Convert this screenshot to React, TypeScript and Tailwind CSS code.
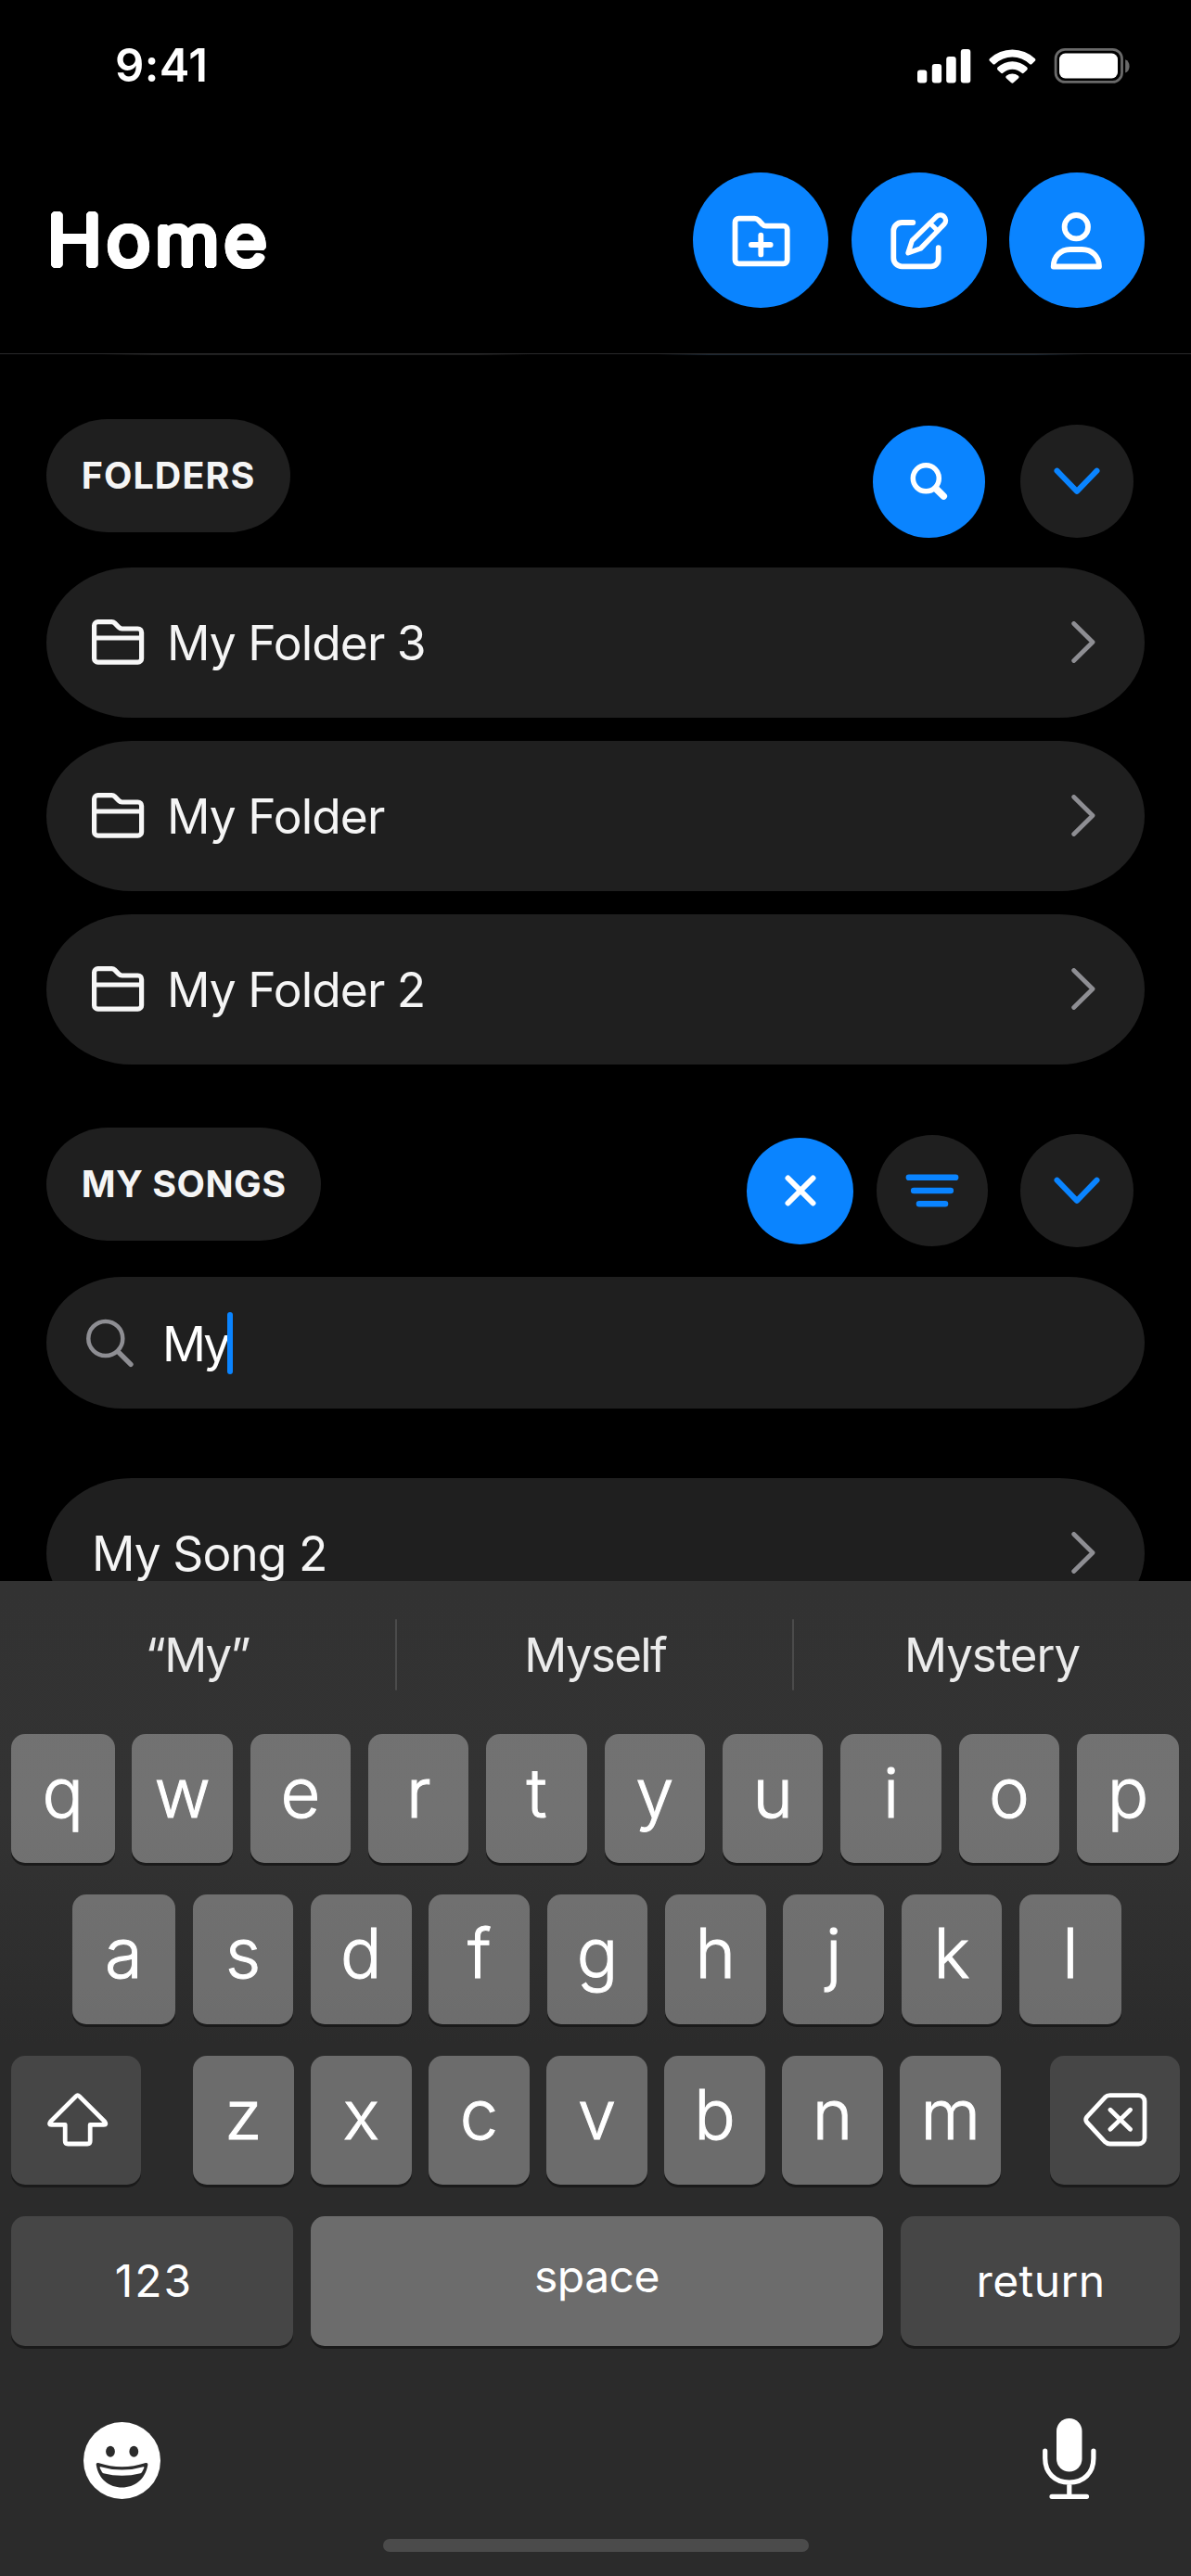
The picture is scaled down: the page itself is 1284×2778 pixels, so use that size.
import React from 'react';

const BLUE = '#0a84ff';

function StatusBar() {
  return (
    <div className="flex h-[141px] items-center justify-between pr-[66px] pl-[124px]">
      <span className="text-[49px] leading-none font-semibold tracking-[0.4px]">9:41</span>
      <svg width="229" height="38" viewBox="0 0 229 38" fill="#fff" aria-hidden>
        <rect x="0" y="23.5" width="10.3" height="14" rx="3" />
        <rect x="15.8" y="17" width="10.3" height="20.5" rx="3" />
        <rect x="31.2" y="9" width="10.5" height="28.5" rx="3" />
        <rect x="46.8" y="1" width="10.5" height="36.5" rx="3" />
        <path d="M77.9 11.2a2 2 0 0 0 .1 2.6l3.3 3.1a1.8 1.8 0 0 0 2.5 0a27 27 0 0 1 37.2 0a1.8 1.8 0 0 0 2.5 0l3.3-3.1a2 2 0 0 0 .1-2.6A35.8 35.8 0 0 0 77.9 11.2Z" />
        <path d="M86.6 20.6a2 2 0 0 0 0 2.8l3.3 3.2a1.9 1.9 0 0 0 2.6 0a14.8 14.8 0 0 1 19.8 0a1.9 1.9 0 0 0 2.6 0l3.3-3.2a2 2 0 0 0 0-2.8a23 23 0 0 0-31.6 0Z" />
        <path d="M95.9 29.7a1.9 1.9 0 0 0 .1 2.7l5 4.7a2 2 0 0 0 2.8 0l5-4.7a1.9 1.9 0 0 0 .1-2.7a10.4 10.4 0 0 0-13 0Z" />
        <rect x="149.1" y="1.4" width="71.4" height="35" rx="10" fill="none" stroke="#6a6a6a" strokeWidth="2.8" />
        <rect x="153" y="5.5" width="63" height="27" rx="6.5" />
        <path d="M224.2 12.2v14.4c2.8-1 4.4-4 4.4-7.2s-1.6-6.2-4.4-7.2Z" fill="#6a6a6a" />
      </svg>
    </div>
  );
}

function RoundAction({ children }: { children: React.ReactNode }) {
  return (
    <button className="size-[146px] rounded-full bg-[#0a84ff]">
      <svg
        width="146"
        height="146"
        viewBox="0 0 146 146"
        fill="none"
        stroke="#fff"
        strokeWidth="5.8"
        strokeLinecap="round"
        strokeLinejoin="round"
      >
        {children}
      </svg>
    </button>
  );
}

function Header() {
  return (
    <header className="flex h-[240px] items-start justify-between pt-[45px] pr-[50px] pl-[50.5px]">
      <h1 className="origin-left scale-x-[1.05] text-[75.5px] leading-[146px] font-light tracking-[5px] [text-shadow:3.3px_0_0_#fff,-3.3px_0_0_#fff,0_3.3px_0_#fff,0_-3.3px_0_#fff,2.35px_2.35px_0_#fff,-2.35px_2.35px_0_#fff,2.35px_-2.35px_0_#fff,-2.35px_-2.35px_0_#fff,3.05px_1.25px_0_#fff,-3.05px_1.25px_0_#fff,3.05px_-1.25px_0_#fff,-3.05px_-1.25px_0_#fff,1.25px_3.05px_0_#fff,-1.25px_3.05px_0_#fff,1.25px_-3.05px_0_#fff,-1.25px_-3.05px_0_#fff]">
        Home
      </h1>
      <div className="flex gap-[24.5px]">
        <RoundAction>
          <path d="M49.5 49.7H66.5Q69 49.7 70.8 51.5L75 56Q76.7 57.7 79 57.7H97.7a4 4 0 0 1 4 4V94.3a4 4 0 0 1-4 4H49.5a4 4 0 0 1-4-4V53.7a4 4 0 0 1 4-4Z" />
          <path d="M62.9 78H83.7M73.3 67.6V88.4" />
        </RoundAction>
        <RoundAction>
          <path d="M66.3 54H54.3a9 9 0 0 0-9 9V92.3a9 9 0 0 0 9 9H85.7a8 8 0 0 0 8-8V81.2" />
          <path d="M61 86.8L65.3 73.5L91.8 47.4a5.85 5.85 0 0 1 8.3 8.2L74.5 82Z" strokeWidth="5.4" />
          <path d="M84.5 54.6L93 63" strokeWidth="5" />
        </RoundAction>
        <RoundAction>
          <circle cx="72.3" cy="58.7" r="12.7" />
          <path d="M47.7 101.5C47.7 91 55 83 66 83H78.5C89.5 83 97 91 97 101.5Z" />
        </RoundAction>
      </div>
    </header>
  );
}

function SectionPill({ label, track }: { label: string; track: string }) {
  return (
    <div className="flex h-[122px] items-center rounded-[66px/61px] bg-[#1f1f1f] px-[37.7px] pt-[2px]">
      <span className={`text-[39.5px] leading-none font-bold text-[#f5f5f5] ${track}`}>{label}</span>
    </div>
  );
}

function ExpandButton() {
  return (
    <button className="flex size-[122px] items-center justify-center rounded-full bg-[#1f1f1f]">
      <svg width="50" height="30" viewBox="0 0 50 30" fill="none" stroke={BLUE} strokeWidth="6" strokeLinecap="round" strokeLinejoin="round">
        <path d="M3.5 3.7L25 25.8L46.5 3.7" />
      </svg>
    </button>
  );
}

function Row({ label, folder }: { label: string; folder?: boolean }) {
  return (
    <div className="flex h-[162px] shrink-0 items-center rounded-[92px/81px] bg-[#1f1f1f] pr-[53px] pl-[49px]">
      {folder && (
        <svg className="mr-[24px] -mt-px" width="57" height="49" viewBox="0 0 57 49" fill="none" stroke="#f7f7f7" strokeWidth="5.2" strokeLinejoin="round">
          <path d="M6.6 2.6H21.5Q23.3 2.6 24.6 3.9L29 8.4Q30.6 10 32.5 10H49.6a4 4 0 0 1 4 4V42.2a4 4 0 0 1-4 4H6.6a4 4 0 0 1-4-4V6.6a4 4 0 0 1 4-4Z" />
          <path d="M2.6 20H53.6" />
        </svg>
      )}
      <span className="flex-1 pt-[2px] text-[51.5px] leading-none tracking-[-0.95px] text-[#f5f5f5]">{label}</span>
      <svg className="-mt-px" width="26" height="45" viewBox="0 0 26 45" fill="none" stroke="#8e8e93" strokeWidth="4.8" strokeLinecap="round" strokeLinejoin="round">
        <path d="M2.7 2.5L23 22.5L2.7 42.5" />
      </svg>
    </div>
  );
}

function Content() {
  return (
    <main className="px-[50px]">
      <div className="mt-[70px] flex items-start justify-between">
        <SectionPill label="FOLDERS" track="tracking-[1.06px]" />
        <div className="mt-[6px] mr-[12px] flex items-center gap-[38px]">
          <button className="flex size-[121px] items-center justify-center rounded-full bg-[#0a84ff]">
            <svg width="42" height="42" viewBox="0 0 42 42" fill="none" stroke="#fff" strokeLinecap="round">
              <circle cx="17.3" cy="17.8" r="14" strokeWidth="5.5" />
              <path d="M28.3 29.3L36.3 37.1" strokeWidth="7.5" />
            </svg>
          </button>
          <ExpandButton />
        </div>
      </div>
      <div className="mt-[32px] flex flex-col gap-[25px]">
        <Row label="My Folder 3" folder />
        <Row label="My Folder" folder />
        <Row label="My Folder 2" folder />
      </div>

      <div className="mt-[68px] flex items-start justify-between">
        <SectionPill label="MY SONGS" track="tracking-[0.5px]" />
        <div className="mt-[7px] mr-[12px] flex items-center">
          <button className="flex size-[115px] items-center justify-center rounded-full bg-[#0a84ff]">
            <svg width="34" height="34" viewBox="0 0 34 34" fill="none" stroke="#fff" strokeWidth="6" strokeLinecap="round">
              <path d="M3.5 3.5L30.5 30.5M30.5 3.5L3.5 30.5" />
            </svg>
          </button>
          <button className="ml-[25px] flex size-[120px] items-center justify-center rounded-full bg-[#1f1f1f]">
            <svg width="58" height="36" viewBox="0 0 58 36" stroke={BLUE} strokeWidth="6.6" strokeLinecap="round">
              <path d="M3.9 3.8H54.1M9.2 18H48.8M15 32.2H43" />
            </svg>
          </button>
          <div className="ml-[35px]">
            <ExpandButton />
          </div>
        </div>
      </div>

      <div className="mt-[32px] flex h-[142px] items-center rounded-[82px/71px] bg-[#1f1f1f] pl-[43px]">
        <svg width="52" height="53" viewBox="0 0 52 53" fill="none" stroke="#8e8e93" strokeLinecap="round">
          <circle cx="20.8" cy="21.5" r="18.5" strokeWidth="4.5" />
          <path d="M35 36.3L48 49.3" strokeWidth="5.4" />
        </svg>
        <span className="ml-[30px] pt-[3px] text-[52px] leading-none tracking-[-3px]">My</span>
        <span className="ml-[-0.5px] h-[67px] w-[6.5px] rounded-full bg-[#0a84ff]" />
      </div>

      <div className="mt-[75px] flex flex-col">
        <Row label="My Song 2" />
      </div>
    </main>
  );
}

function Letter({ c, width = 'w-[108.5px]' }: { c: string; width?: string }) {
  return (
    <div
      className={`flex h-[139.5px] justify-center rounded-[15px] bg-white/[0.31] text-[74px] leading-[126px] font-light shadow-[0_3px_0_#1a1a1a] [-webkit-text-stroke:1px_#fff] ${width}`}
    >
      {c}
    </div>
  );
}

const darkKey =
  'flex h-[139.5px] items-center justify-center rounded-[15px] bg-[#464646] shadow-[0_3px_0_#1a1a1a]';

function Keyboard() {
  return (
    <section className="flex h-[1073px] flex-col bg-[linear-gradient(180deg,#323232_0px,#333333_250px,#2b2b2b_500px,#2b2b2b_100%)]">
      <div className="flex h-[159px] items-center text-[51px] leading-none text-[#ebebeb]">
        <div className="w-[425.5px] text-center tracking-[-1.9px]">“My”</div>
        <div className="h-[77px] w-[2.5px] rounded-full bg-[#4b4b4b]" />
        <div className="w-[425.5px] pl-[2px] text-center tracking-[-1.65px]">Myself</div>
        <div className="h-[77px] w-[2.5px] rounded-full bg-[#4b4b4b]" />
        <div className="w-[427px] text-center tracking-[-1.05px]">Mystery</div>
      </div>

      <div className="mt-[5.5px] flex flex-col gap-[34px]">
        <div className="flex justify-between pr-[13px] pl-[12px]">
          {'qwertyuiop'.split('').map((c) => (
            <Letter key={c} c={c} width={c === 'q' ? 'w-[111.5px]' : c === 'p' ? 'w-[110px]' : undefined} />
          ))}
        </div>
        <div className="flex justify-between pr-[75px] pl-[77.5px]">
          {'asdfghjkl'.split('').map((c) => (
            <Letter key={c} c={c} width={c === 'a' ? 'w-[111.5px]' : c === 'l' ? 'w-[110px]' : undefined} />
          ))}
        </div>
        <div className="flex justify-between px-[12px]">
          <div className={`${darkKey} w-[140px] pl-[3px]`}>
            <svg width="66" height="58" viewBox="0 0 66 58" fill="none" stroke="#fff" strokeWidth="4.8" strokeLinejoin="round">
              <path d="M30.9 3.6Q32.7 1.8 34.5 3.6L61.9 31Q64.2 34.3 60.9 34.3H46.2V52Q46.2 55 43.2 55H22.2Q19.2 55 19.2 52V34.3H4.500Q1.200 34.300 3.500 31Z" />
            </svg>
          </div>
          <div className="ml-[3px] flex w-[871px] justify-between">
            {'zxcvbnm'.split('').map((c) => (
              <Letter key={c} c={c} />
            ))}
          </div>
          <div className={`${darkKey} w-[140px]`}>
            <svg width="69" height="58" viewBox="0 0 69 58" fill="none" stroke="#fff" strokeWidth="4.8" strokeLinecap="round" strokeLinejoin="round">
              <path d="M28.5 2.6H59.5a6.5 6.5 0 0 1 6.5 6.5V48.5a6.5 6.5 0 0 1-6.5 6.5H28.5Q25.5 55 23.3 52.8L3.6 31.5Q1.8 28.8 3.6 26.1L23.3 4.8Q25.5 2.6 28.5 2.6Z" />
              <path d="M29 18.3L50.500 39.300M50.500 18.300L29 39.300" />
            </svg>
          </div>
        </div>
        <div className="flex justify-between px-[12px] text-[48px]">
          <div className={`${darkKey} w-[304px] pl-[4px] leading-none tracking-[2px]`}>123</div>
          <div className="flex h-[139.5px] w-[617px] justify-center rounded-[15px] bg-white/[0.31] leading-[129px] tracking-[-0.5px] shadow-[0_3px_0_#1a1a1a]">
            space
          </div>
          <div className={`${darkKey} w-[301px] pl-px leading-none tracking-[0.4px]`}>return</div>
        </div>
      </div>

      <div className="mt-[76.5px] flex h-[90px] items-center justify-between pr-[102.5px] pl-[90px]">
        <svg className="mt-[4px]" width="83" height="83" viewBox="0 0 83 83">
          <circle cx="41.5" cy="41.5" r="41.5" fill="#fff" />
          <ellipse cx="29" cy="31.7" rx="4.9" ry="6" fill="#2b2b2b" />
          <ellipse cx="54.3" cy="31.7" rx="4.9" ry="6" fill="#2b2b2b" />
          <path d="M16 44Q41.5 52.5 67 44Q69.8 43.5 69.3 46.5C66.5 62 55 70.5 41.5 70.5C28 70.5 16.5 62 13.8 46.5Q13.2 43.5 16 44Z" fill="#2b2b2b" />
          <path d="M18.5 48.2Q41.5 55 64.5 48.2Q65.8 48 65.3 49.5L63 54Q62.5 55 61.5 55.2Q41.5 60.5 21.5 55.2Q20.5 55 20 54L17.7 49.5Q17.2 48 18.5 48.2Z" fill="#fff" />
        </svg>
        <svg width="58" height="87" viewBox="0 0 58 87" fill="none" stroke="#fff" strokeWidth="5.2" strokeLinecap="round">
          <rect x="15" y="0" width="27.5" height="57.5" rx="13.75" fill="#fff" stroke="none" />
          <path d="M2.7 35V43C2.7 58.5 13 69.2 28.8 69.2S54.9 58.5 54.9 43V35M28.8 69.5V84M10 84.3H47.5" />
        </svg>
      </div>

      <div className="mt-[42px] h-[14px] w-[459px] self-center rounded-full bg-[#4b4b4b]" />
    </section>
  );
}

export default function App() {
  return (
    <div className="h-[2778px] w-[1284px] overflow-hidden bg-black font-['Inter',sans-serif] text-white">
      <div className="h-[1705px] overflow-hidden">
        <StatusBar />
        <Header />
        <div className="h-px bg-[#29292b]" />
        <div className="-mb-px flex h-px justify-between pr-[114px] pl-[110px]">
          <div className="w-[460px] bg-[linear-gradient(90deg,transparent,#1c1c1c_12%,#1c1c1c_88%,transparent)]" />
          <div className="w-[460px] bg-[linear-gradient(90deg,transparent,#1b2733_12%,#1b2733_88%,transparent)]" />
        </div>
        <Content />
      </div>
      <Keyboard />
    </div>
  );
}
